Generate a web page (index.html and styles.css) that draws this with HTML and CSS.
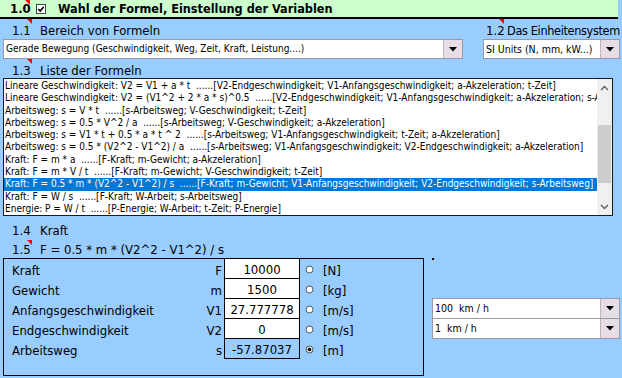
FILE: index.html
```html
<!DOCTYPE html>
<html>
<head>
<meta charset="utf-8">
<link rel="stylesheet" href="styles.css">
</head>
<body>
<div class="header">
  <div class="num note">1.0</div>
  <svg class="check" width="10" height="10" viewBox="0 0 10 10"><rect x="0.5" y="0.5" width="9" height="9" fill="#fff" stroke="#444"/><path d="M2.2 5 L4.2 7 L7.8 2.8" fill="none" stroke="#000" stroke-width="1.6"/></svg>
  <div class="title">Wahl der Formel, Einstellung der Variablen</div>
</div>

<div class="top">
  <div class="col-left">
    <div class="lrow"><div class="num note">1.1</div><div class="ltext">Bereich von Formeln</div></div>
    <div class="combo wide">
      <div class="combo-val">Gerade Bewegung (Geschwindigkeit, Weg, Zeit, Kraft, Leistung....)</div>
      <div class="combo-btn"><svg width="8" height="5" viewBox="0 0 8 5"><path d="M0 0 H8 L4 4.5 Z" fill="#000"/></svg></div>
    </div>
  </div>
  <div class="col-right">
    <div class="lrow"><div class="num2 note">1.2</div><div class="ltext2">Das Einheitensystem</div></div>
    <div class="combo units">
      <div class="combo-val">SI Units (N, mm, kW...)</div>
      <div class="combo-btn"><svg width="8" height="5" viewBox="0 0 8 5"><path d="M0 0 H8 L4 4.5 Z" fill="#000"/></svg></div>
    </div>
  </div>
</div>

<div class="lrow r13"><div class="num note">1.3</div><div class="ltext">Liste der Formeln</div></div>

<div class="listbox">
  <div class="items">
    <div class="item">Lineare Geschwindigkeit: V2 = V1 + a * t  ......[V2-Endgeschwindigkeit; V1-Anfangsgeschwindigkeit; a-Akzeleration; t-Zeit]</div>
    <div class="item">Lineare Geschwindigkeit: V2 = (V1^2 + 2 * a * s)^0.5  ......[V2-Endgeschwindigkeit; V1-Anfangsgeschwindigkeit; a-Akzeleration; s-Arbeitsweg]</div>
    <div class="item">Arbeitsweg: s = V * t  ......[s-Arbeitsweg; V-Geschwindigkeit; t-Zeit]</div>
    <div class="item">Arbeitsweg: s = 0.5 * V^2 / a  ......[s-Arbeitsweg; V-Geschwindigkeit; a-Akzeleration]</div>
    <div class="item">Arbeitsweg: s = V1 * t + 0.5 * a * t ^ 2  ......[s-Arbeitsweg; V1-Anfangsgeschwindigkeit; t-Zeit; a-Akzeleration]</div>
    <div class="item">Arbeitsweg: s = 0.5 * (V2^2 - V1^2) / a  ......[s-Arbeitsweg; V1-Anfangsgeschwindigkeit; V2-Endgeschwindigkeit; a-Akzeleration]</div>
    <div class="item">Kraft: F = m * a  ......[F-Kraft; m-Gewicht; a-Akzeleration]</div>
    <div class="item">Kraft: F = m * V / t  ......[F-Kraft; m-Gewicht; V-Geschwindigkeit; t-Zeit]</div>
    <div class="item sel">Kraft: F = 0.5 * m * (V2^2 - V1^2) / s  ......[F-Kraft; m-Gewicht; V1-Anfangsgeschwindigkeit; V2-Endgeschwindigkeit; s-Arbeitsweg]</div>
    <div class="item">Kraft: F = W / s  ......[F-Kraft; W-Arbeit; s-Arbeitsweg]</div>
    <div class="item">Energie: P = W / t  ......[P-Energie; W-Arbeit; t-Zeit; P-Energie]</div>
  </div>
  <div class="scroll">
    <div class="sb-arrow"><svg width="9" height="6" viewBox="0 0 9 6"><path d="M1 5 L4.5 1.5 L8 5" fill="none" stroke="#606060" stroke-width="1.4"/></svg></div>
    <div class="sb-track"><div class="sb-thumb"></div></div>
    <div class="sb-arrow"><svg width="9" height="6" viewBox="0 0 9 6"><path d="M1 1 L4.5 4.5 L8 1" fill="none" stroke="#606060" stroke-width="1.4"/></svg></div>
  </div>
</div>

<div class="lrow r14"><div class="num">1.4</div><div class="ltext">Kraft</div></div>
<div class="lrow r15"><div class="num note">1.5</div><div class="ltext">F = 0.5 * m * (V2^2 - V1^2) / s</div></div>

<div class="lower">
  <div class="vars">
    <div class="vrow">
      <div class="vlabel">Kraft</div><div class="vsym">F</div><div class="vval">10000</div>
      <div class="vradio"><svg width="9" height="9" viewBox="0 0 9 9"><circle cx="4.5" cy="4.5" r="3.5" fill="#fff" stroke="#555"/></svg></div>
      <div class="vunit">[N]</div>
    </div>
    <div class="vrow">
      <div class="vlabel">Gewicht</div><div class="vsym">m</div><div class="vval">1500</div>
      <div class="vradio"><svg width="9" height="9" viewBox="0 0 9 9"><circle cx="4.5" cy="4.5" r="3.5" fill="#fff" stroke="#555"/></svg></div>
      <div class="vunit">[kg]</div>
    </div>
    <div class="vrow">
      <div class="vlabel">Anfangsgeschwindigkeit</div><div class="vsym">V1</div><div class="vval">27.777778</div>
      <div class="vradio"><svg width="9" height="9" viewBox="0 0 9 9"><circle cx="4.5" cy="4.5" r="3.5" fill="#fff" stroke="#555"/></svg></div>
      <div class="vunit">[m/s]</div>
    </div>
    <div class="vrow">
      <div class="vlabel">Endgeschwindigkeit</div><div class="vsym">V2</div><div class="vval">0</div>
      <div class="vradio"><svg width="9" height="9" viewBox="0 0 9 9"><circle cx="4.5" cy="4.5" r="3.5" fill="#fff" stroke="#555"/></svg></div>
      <div class="vunit">[m/s]</div>
    </div>
    <div class="vrow">
      <div class="vlabel">Arbeitsweg</div><div class="vsym">s</div><div class="vval calc">-57.87037</div>
      <div class="vradio"><svg width="9" height="9" viewBox="0 0 9 9"><circle cx="4.5" cy="4.5" r="3.5" fill="#e8e8e8" stroke="#555"/><circle cx="4.5" cy="4.5" r="1.8" fill="#000"/></svg></div>
      <div class="vunit">[m]</div>
    </div>
  </div>
  <div class="right">
    <div class="dot"></div>
    <div class="combo speed">
      <div class="combo-val">100  km / h</div>
      <div class="combo-btn"><svg width="8" height="5" viewBox="0 0 8 5"><path d="M0 0 H8 L4 4.5 Z" fill="#000"/></svg></div>
    </div>
    <div class="combo speed second">
      <div class="combo-val">1  km / h</div>
      <div class="combo-btn"><svg width="8" height="5" viewBox="0 0 8 5"><path d="M0 0 H8 L4 4.5 Z" fill="#000"/></svg></div>
    </div>
  </div>
</div>
</body>
</html>
```

FILE: styles.css
```css
html, body {
  margin: 0;
  padding: 0;
}
body {
  width: 622px;
  height: 378px;
  overflow: hidden;
  background: #99ccff;
  color: #000;
  font-family: "DejaVu Sans Condensed", "DejaVu Sans", sans-serif;
  font-stretch: condensed;
  font-size: 13px;
}

/* comment indicator triangle */
.note { position: relative; }
.note::after {
  content: "";
  position: absolute;
  top: 0;
  right: 0;
  width: 0;
  height: 0;
  border-style: solid;
  border-width: 0 5px 5px 0;
  border-color: transparent #ff0000 transparent transparent;
}

.header {
  display: flex;
  align-items: center;
  width: 618px;
  height: 17px;
  background: #ccffcc;
  border-bottom: 2px solid #000;
}
.header .num {
  width: 30px;
  height: 17px;
  box-sizing: border-box;
  padding-left: 10px;
  font-weight: bold;
  font-size: 13px;
  line-height: 17px;
}
.check { margin-left: 6px; display: block; }
.title {
  margin-left: 12px;
  font-weight: bold;
  font-size: 12.6px;
  line-height: 17px;
  white-space: nowrap;
}

.top { display: flex; }
.col-left { width: 483px; }
.col-right { width: 139px; }

.lrow {
  display: flex;
  height: 20px;
  font-size: 13px;
  white-space: nowrap;
}
.lrow .num {
  width: 32px;
  box-sizing: border-box;
  padding-left: 12px;
  padding-top: 4px;
  line-height: 16px;
}
.ltext {
  padding-left: 8px;
  padding-top: 4px;
  line-height: 16px;
}
.num2 {
  width: 21px;
  box-sizing: border-box;
  padding-left: 3px;
  padding-top: 4px;
  line-height: 16px;
}
.ltext2 {
  padding-left: 3px;
  padding-top: 4px;
  line-height: 16px;
  font-size: 12.6px;
  letter-spacing: -0.35px;
}

.combo {
  display: flex;
  height: 20px;
  box-sizing: border-box;
  border: 1px solid #9a98a4;
  background: #fff;
}
.combo.wide { margin-left: 3px; width: 460px; }
.combo.units { width: 137px; }
.combo-val {
  flex: 1;
  font-size: 10.5px;
  line-height: 18px;
  padding-left: 2px;
  white-space: pre;
  overflow: hidden;
}
.combo.wide .combo-val { font-size: 10px; }
.combo-btn {
  width: 18px;
  background: #e6dde6;
  border-left: 1px solid #bdb4bd;
  display: flex;
  align-items: center;
  justify-content: center;
}

.r13 { height: 19px; }

.listbox {
  margin-left: 3px;
  width: 610px;
  height: 138px;
  box-sizing: border-box;
  border: 1px solid #1a1a1a;
  background: #fff;
  display: flex;
}
.items {
  flex: 1;
  padding-top: 1px;
  overflow: hidden;
  font-size: 10px;
}
.item {
  height: 12.3px;
  line-height: 12.3px;
  padding-left: 1px;
  white-space: pre;
}
.item.sel { background: #0078d7; color: #fff; }

.scroll {
  width: 15px;
  background: #f0f0f0;
  display: flex;
  flex-direction: column;
}
.sb-arrow {
  height: 17px;
  display: flex;
  align-items: center;
  justify-content: center;
}
.sb-track { flex: 1; }
.sb-thumb {
  margin: 29px 1px 0 1px;
  height: 58px;
  background: #cdcdcd;
}

.r14 { height: 24px; }
.r14 .num, .r14 .ltext { padding-top: 7px; }
.r15 { height: 18px; }
.r15 .num, .r15 .ltext { padding-top: 2px; }

.lower { display: flex; }
.vars {
  margin-left: 3px;
  width: 421px;
  height: 118px;
  box-sizing: border-box;
  border: 1px solid #000;
}
.vrow {
  display: grid;
  grid-template-columns: 196px 24px 76px 22px 1fr;
  height: 20px;
  font-size: 13px;
  line-height: 16px;
}
.vlabel { padding-left: 8px; padding-top: 4px; white-space: nowrap; }
.vsym { text-align: right; padding-right: 2px; padding-top: 4px; }
.vval {
  box-sizing: border-box;
  border-left: 1px solid #000;
  border-right: 1px solid #000;
  border-bottom: 1px solid #000;
  background: #fff;
  text-align: center;
  padding-top: 3px;
}
.vval.calc { background: transparent; }
.vradio { padding-left: 5px; padding-top: 6px; }
.vradio svg { display: block; }
.vunit { padding-left: 1px; padding-top: 4px; }

.right { margin-left: 8px; width: 188px; }
.dot { width: 2px; height: 2px; background: #000; margin-bottom: 38px; }
.combo.speed { width: 188px; height: 21px; }
.combo.speed.second { border-top: none; height: 20px; }
.combo.speed .combo-val { line-height: 19px; }
```
